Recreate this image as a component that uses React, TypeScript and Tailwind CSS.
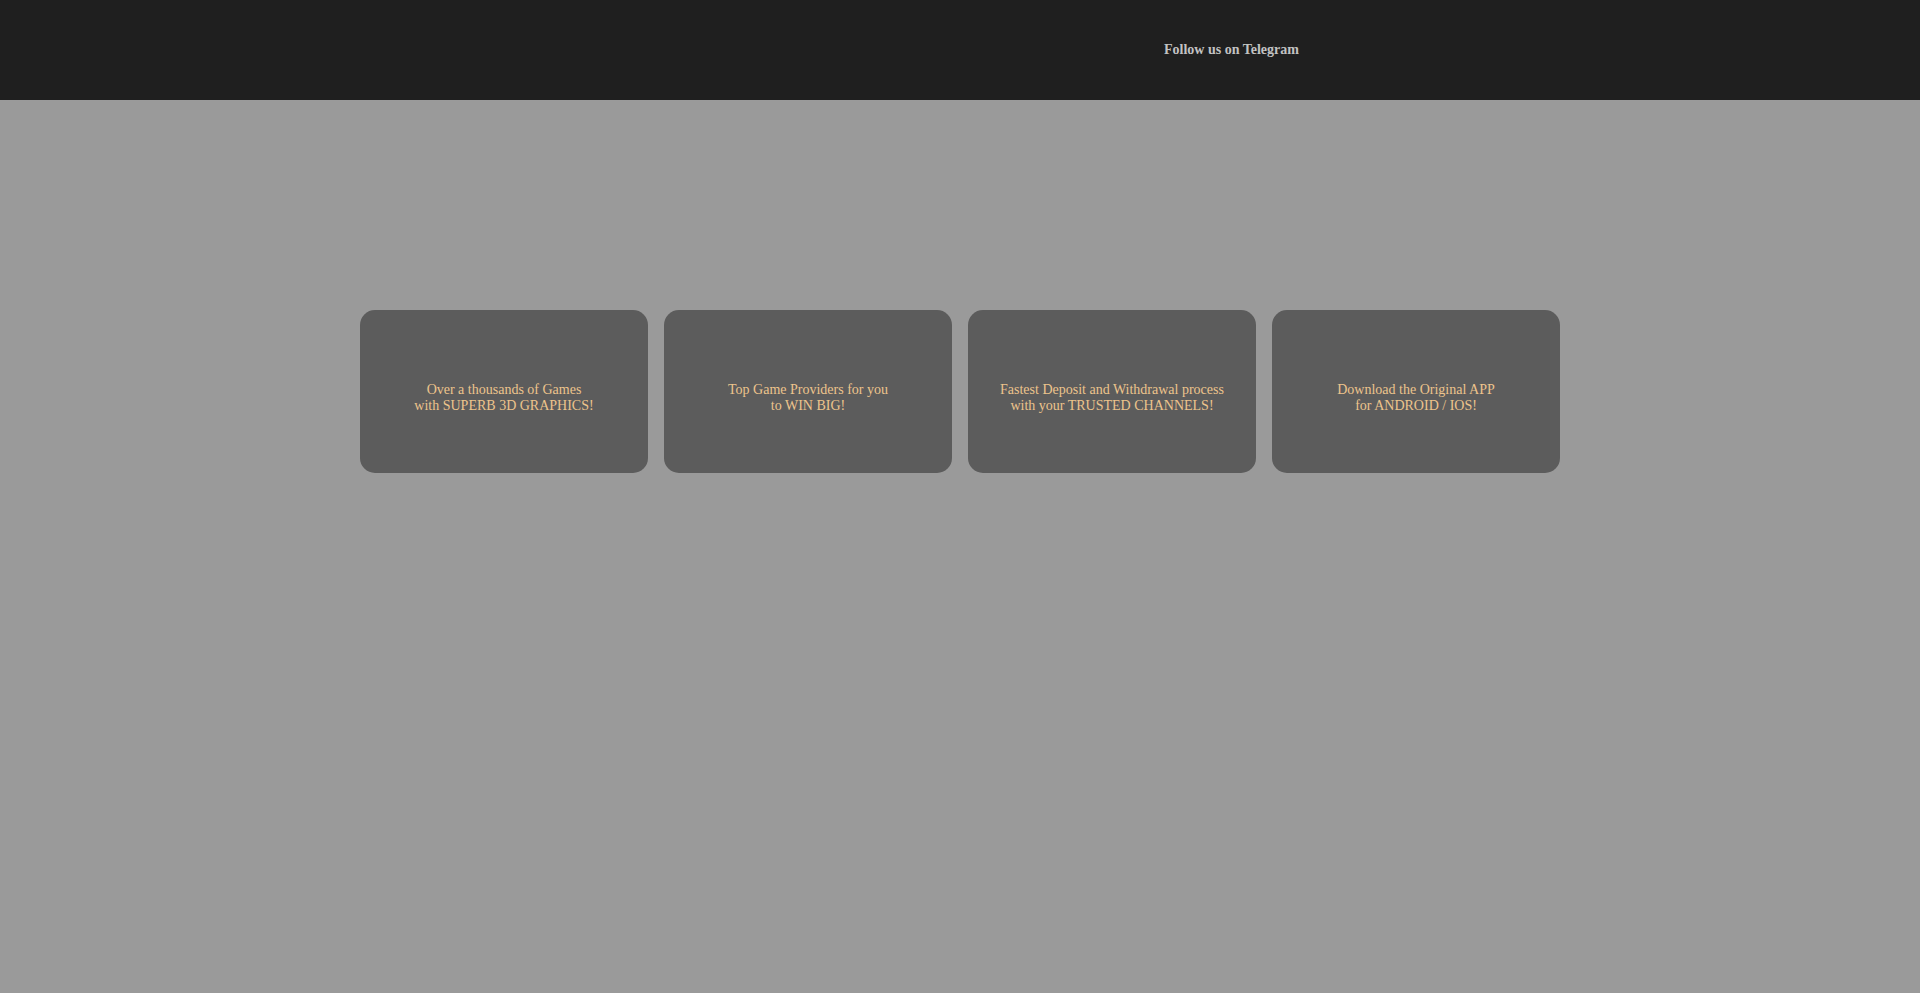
const cards = [
  ["Over a thousands of Games", "with SUPERB 3D GRAPHICS!"],
  ["Top Game Providers for you", "to WIN BIG!"],
  ["Fastest Deposit and Withdrawal process", "with your TRUSTED CHANNELS!"],
  ["Download the Original APP", "for ANDROID / IOS!"],
];

export default function App() {
  return (
    <div
      className="min-h-[993px] bg-[#9a9a9a]"
      style={{ fontFamily: '"Liberation Serif", "Times New Roman", serif' }}
    >
      {/* header */}
      <header className="h-[100px] bg-[#1f1f1f] flex items-start pt-[42px] pl-[1164px]">
        <a className="text-[14px] leading-[16px] font-bold text-[#c2c2c2] cursor-pointer">
          Follow us on Telegram
        </a>
      </header>

      {/* features */}
      <div className="pt-[210px] flex justify-center gap-4">
        {cards.map(([a, b]) => (
          <div
            key={a}
            className="w-[288px] h-[163px] rounded-[15px] bg-[#5c5c5c] flex flex-col items-center justify-center pt-[13px] text-center text-[14px] leading-[16px] text-[#edc48c]"
          >
            <div>{a}</div>
            <div>{b}</div>
          </div>
        ))}
      </div>
    </div>
  );
}
